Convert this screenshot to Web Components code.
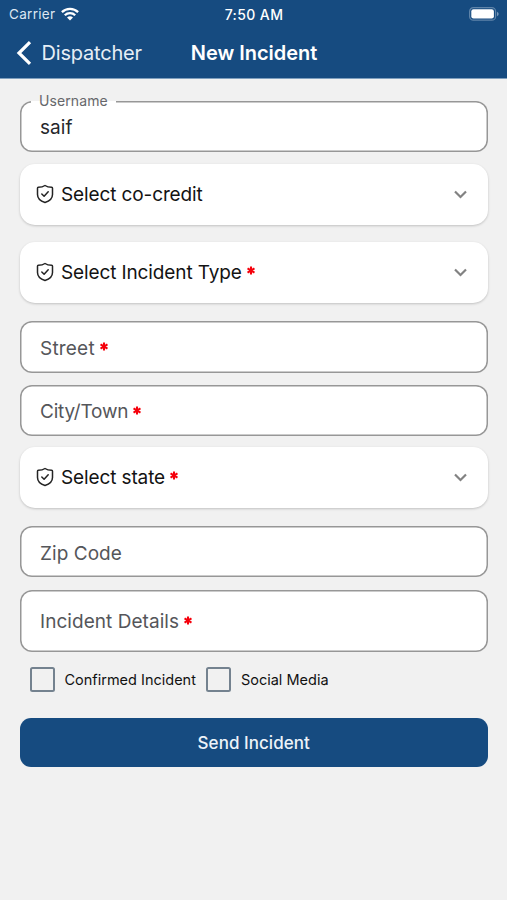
<!DOCTYPE html>
<html lang="en">
<head>
<meta charset="utf-8">
<title>New Incident</title>
<style>
html, body { margin: 0; height: 100%; }
body { background: #f1f1f1; font-family: Inter, "Liberation Sans", sans-serif; color: #111; overflow: hidden; }
</style>
</head>
<body>
<incident-page></incident-page>
<script>
function define(name, html) {
  const t = document.createElement('template');
  t.innerHTML = html;
  customElements.define(name, class extends HTMLElement {
    constructor() {
      super();
      this.attachShadow({ mode: 'open' }).appendChild(t.content.cloneNode(true));
    }
  });
}

define('status-bar', `
<style>
:host { display: grid; grid-template-columns: 1fr auto 1fr; align-items: center; height: 27px; padding: 0 8px 0 9px; color: #fff; box-sizing: border-box; line-height: 29px; }
.left { display: flex; align-items: center; gap: 6px; font-size: 13.5px; letter-spacing: .3px; color: #dce7f2; }
.time { font-size: 14px; font-weight: 500; letter-spacing: .4px; }
svg { display: block; }
.left svg { margin-top: -2px; }
.bat { justify-self: end; margin-top: -1px; }
</style>
<div class="left"><span>Carrier</span>
<svg width="18" height="14" viewBox="0 0 18 14" fill="none" stroke="#fff" stroke-width="2.3"><path d="M.9 5.1a11.6 11.6 0 0 1 16.2 0M3.8 8.2a7.4 7.4 0 0 1 10.4 0"/><path d="M9 13.6 6 10.6a4.3 4.3 0 0 1 6 0Z" fill="#fff" stroke="none"/></svg></div>
<span class="time">7:50 AM</span>
<svg class="bat" width="30" height="14" viewBox="0 0 30 14"><rect x=".6" y=".6" width="26" height="12.6" rx="3.8" fill="none" stroke="#5f84a9" stroke-width="1.2"/><rect x="2.3" y="2.3" width="22.6" height="9.2" rx="2.2" fill="#fff"/><path d="M28 4.8q1.7.7 1.7 2.2T28 9.2Z" fill="#7797b8"/></svg>
`);

define('nav-bar', `
<style>
:host { display: grid; grid-template-columns: 1fr auto 1fr; align-items: center; height: 51px; padding: 0 15px 0 16px; color: #fff; box-sizing: border-box; line-height: 52px; }
.back { display: flex; align-items: center; gap: 9.5px; font-size: 20px; letter-spacing: -.2px; color: #e6eef6; }
.title { font-size: 20px; font-weight: 600; letter-spacing: -.03px; }
svg { display: block; }
</style>
<div class="back"><svg width="16" height="26" viewBox="0 0 16 26" fill="none" stroke="#fff" stroke-width="3.2"><path d="M14 2.2 3 13 14 23.8"/></svg><span><slot name="back"></slot></span></div>
<span class="title"><slot></slot></span>
`);

define('req-mark', `
<style>:host { display: block; margin: -4px 0 0 5px; } svg { display: block; }</style>
<svg width="8" height="9" viewBox="0 0 8 9" stroke="#f5000b" stroke-width="2.1"><path d="M4 .4v8.2M.5 2.4l7 4.2M7.5 2.4l-7 4.2"/></svg>
`);

define('text-field', `
<style>
:host { display: flex; align-items: center; position: relative; box-sizing: border-box; height: 51px; padding: 4px 20px 0; box-shadow: inset 0 0 0 1.5px #979797; border-radius: 12px; background: #fff; color: #55565a; font-size: 19px; letter-spacing: .05px; line-height: 24px; }
.label { position: absolute; left: 11px; top: -9px; padding: 0 8px; height: 18px; line-height: 18px; font-size: 14px; letter-spacing: .1px; color: #66676b; background: linear-gradient(#f1f1f1 9px, #fff 9px); display: none; }
:host([floating]) .label { display: block; }
:host([floating]) { color: #26272b; }
</style>
<span class="label"><slot name="label"></slot></span><slot></slot>
`);

define('select-field', `
<style>
:host { display: flex; align-items: center; box-sizing: border-box; height: 61px; padding: 0 19px 0 16px; border-radius: 15px; background: #fff; box-shadow: 0 1px 2.5px rgba(0,0,0,.2); color: #131313; font-size: 19px; line-height: 24px; letter-spacing: -.12px; }
.text { display: flex; align-items: center; flex: 1; margin-left: 7px; padding-top: 1px; }
svg { display: block; }
</style>
<svg width="18" height="20" viewBox="0 0 18 20" fill="none" stroke="#242424" stroke-width="1.5" stroke-linejoin="round" stroke-linecap="round"><path d="M9 1.5C7 2.9 4.8 3.3 2.3 3.3Q1.5 3.3 1.5 4.2V10.5C1.5 14.8 4.8 17.2 9 18.5C13.2 17.2 16.5 14.8 16.5 10.5V4.2Q16.5 3.3 15.7 3.3C13.2 3.3 11 2.9 9 1.5Z"/><path d="m5.8 10 2.3 2.3 4.1-4.5"/></svg>
<div class="text"><slot></slot></div>
<svg width="16" height="12" viewBox="0 0 16 12" fill="none" stroke="#828282" stroke-width="2.2"><path d="m2 3.5 5.5 5.5 5.5-5.5"/></svg>
`);

define('check-option', `
<style>
:host { display: flex; align-items: center; gap: 9.5px; font-size: 14.5px; letter-spacing: 0; line-height: 25px; }
i { box-sizing: border-box; width: 25px; height: 25px; border: 2px solid #74828f; border-radius: 2.5px; }
</style>
<i></i><span><slot></slot></span>
`);

define('send-button', `
<style>
:host { display: block; }
button { display: block; width: 100%; height: 49px; border: 0; border-radius: 11px; background: #164b80; color: #edf3f9; font: 500 17px/50px Inter, "Liberation Sans", sans-serif; padding: 0; letter-spacing: .05px; }
</style>
<button><slot></slot></button>
`);

define('incident-page', `
<style>
:host { display: block; width: 507px; height: 900px; }
header { background: #164b80; height: 79px; border-bottom: 1px solid #7f9fbe; box-sizing: border-box; }
main { display: flex; flex-direction: column; padding: 21.5px 19.5px 0 20px; }
.checks { display: flex; gap: 10.5px; padding-left: 10px; margin-top: 15px; }
</style>
<header><status-bar></status-bar><nav-bar><span slot="back">Dispatcher</span>New Incident</nav-bar></header>
<main>
<text-field floating style="height:51.5px"><span slot="label">Username</span><span>saif</span></text-field>
<select-field style="margin-top:11.5px"><span>Select co-credit</span></select-field>
<select-field style="margin-top:17px"><span>Select Incident Type</span><req-mark></req-mark></select-field>
<text-field style="margin-top:18.5px;height:51.5px"><span style="letter-spacing:.2px">Street</span><req-mark></req-mark></text-field>
<text-field style="margin-top:12px"><span style="letter-spacing:-.2px">City/Town</span><req-mark></req-mark></text-field>
<select-field style="margin-top:11px"><span>Select state</span><req-mark></req-mark></select-field>
<text-field style="margin-top:18.5px"><span>Zip Code</span></text-field>
<text-field style="margin-top:13px;height:62px;padding-top:2px"><span>Incident Details</span><req-mark></req-mark></text-field>
<div class="checks"><check-option>Confirmed Incident</check-option><check-option>Social Media</check-option></div>
<send-button style="margin-top:26px">Send Incident</send-button>
</main>
`);
</script>
</body>
</html>
